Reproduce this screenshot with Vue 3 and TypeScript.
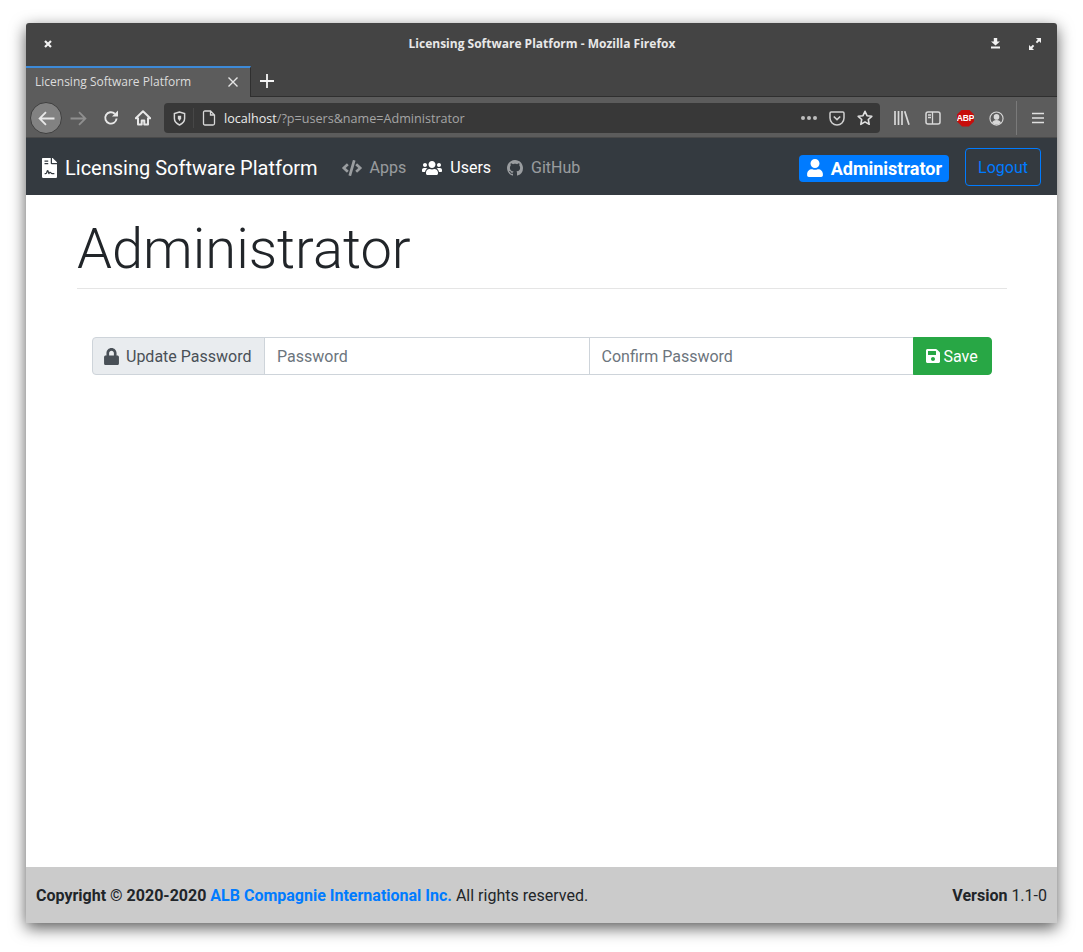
<script setup lang="ts">
interface NavLink {
  label: string
  viewBox: string
  width: number
  path: string
  active?: boolean
}

const navLinks: NavLink[] = [
  {
    label: 'Apps',
    viewBox: '0 0 640 512',
    width: 20,
    path: 'M278.9 511.5l-61-17.7c-6.4-1.8-10-8.5-8.2-14.9L346.2 8.7c1.8-6.4 8.5-10.1 14.9-8.2l61 17.7c6.4 1.8 10 8.5 8.2 14.9L293.8 503.3c-1.9 6.4-8.5 10.1-14.9 8.2zm-114-112.2l43.5-46.4c4.6-4.9 4.3-12.7-.8-17.2L117 256l90.6-79.7c5.1-4.5 5.5-12.3.8-17.2l-43.5-46.4c-4.5-4.8-12.1-5.1-17-.5L3.8 247.2c-5.1 4.7-5.1 12.8 0 17.5l144.1 135.1c4.9 4.6 12.5 4.4 17-.5zm327.2.6l144.1-135.1c5.1-4.7 5.1-12.8 0-17.5L492.1 112.1c-4.8-4.5-12.4-4.3-17 .5L431.6 159c-4.6 4.9-4.3 12.7.8 17.2L523 256l-90.6 79.7c-5.1 4.5-5.5 12.3-.8 17.2l43.5 46.4c4.5 4.9 12.1 5.1 17 .6z'
  },
  {
    label: 'Users',
    viewBox: '0 0 640 512',
    width: 20,
    active: true,
    path: 'M96 224c35.3 0 64-28.7 64-64s-28.7-64-64-64-64 28.7-64 64 28.7 64 64 64zm448 0c35.3 0 64-28.7 64-64s-28.7-64-64-64-64 28.7-64 64 28.7 64 64 64zm32 32h-64c-17.6 0-33.5 7.1-45.1 18.6 40.3 22.1 68.9 62 75.1 109.4h66c17.7 0 32-14.3 32-32v-32c0-35.3-28.7-64-64-64zm-256 0c61.9 0 112-50.1 112-112S381.9 32 320 32 208 82.1 208 144s50.1 112 112 112zm76.8 32h-8.3c-20.8 10-43.9 16-68.5 16s-47.6-6-68.5-16h-8.3C179.6 288 128 339.6 128 403.2V432c0 26.5 21.5 48 48 48h288c26.5 0 48-21.5 48-48v-28.8c0-63.6-51.6-115.2-115.2-115.2zm-223.7-13.4C161.5 263.1 145.6 256 128 256H64c-35.3 0-64 28.7-64 64v32c0 17.7 14.3 32 32 32h65.9c6.3-47.4 34.9-87.3 75.2-109.4z'
  },
  {
    label: 'GitHub',
    viewBox: '0 0 16 16',
    width: 16,
    path: 'M8 0C3.58 0 0 3.58 0 8c0 3.54 2.29 6.53 5.47 7.59.4.07.55-.17.55-.38 0-.19-.01-.82-.01-1.49-2.01.37-2.53-.49-2.69-.94-.09-.23-.48-.94-.82-1.13-.28-.15-.68-.52-.01-.53.63-.01 1.08.58 1.23.82.72 1.21 1.87.87 2.33.66.07-.52.28-.87.51-1.07-1.78-.2-3.64-.89-3.64-3.95 0-.87.31-1.59.82-2.15-.08-.2-.36-1.02.08-2.12 0 0 .67-.21 2.2.82.64-.18 1.32-.27 2-.27.68 0 1.36.09 2 .27 1.53-1.04 2.2-.82 2.2-.82.44 1.1.16 1.92.08 2.12.51.56.82 1.27.82 2.15 0 3.07-1.87 3.75-3.65 3.95.29.25.54.73.54 1.48 0 1.07-.01 1.93-.01 2.2 0 .21.15.46.55.38A8.013 8.013 0 0016 8c0-4.42-3.58-8-8-8z'
  }
]
</script>

<template>
  <div class="desktop">
    <div class="window">
      <header class="titlebar">
        <div class="wm-left">
          <svg viewBox="0 0 10 10" width="10" height="10"><path d="M2 2l6 6M8 2l-6 6" stroke="#f2f2f2" stroke-width="2.2" /></svg>
        </div>
        <span class="title">Licensing Software Platform - Mozilla Firefox</span>
        <div class="wm-right">
          <svg viewBox="0 0 9 11" width="9" height="11"><path d="M2.800 0h3.400v3.600H9L4.500 7.600 0 3.600h2.800zM0 8.600h9v2H0z" fill="#f2f2f2" /></svg>
          <svg viewBox="0 0 13 13" width="12" height="12"><path d="M7.500 0H13v5.500l-2-2L8.800 5.700 7.300 4.200 9.500 2zM5.500 13H0V7.500l2 2 2.200-2.200 1.500 1.500L3.500 11z" fill="#f2f2f2" /></svg>
        </div>
      </header>

      <div class="tabstrip">
        <div class="tab">
          <span class="tab-label">Licensing Software Platform</span>
          <svg viewBox="0 0 10 10" width="10" height="10"><path d="M.5.5l9 9M9.500.5l-9 9" stroke="#e6e6e6" stroke-width="1.400" /></svg>
        </div>
        <svg class="newtab" viewBox="0 0 14 14" width="14" height="14"><path d="M7 0v14M0 7h14" stroke="#f5f5f5" stroke-width="1.800" /></svg>
      </div>

      <div class="toolbar">
        <button class="back">
          <svg viewBox="0 0 16 14" width="17" height="15"><path d="M15.500 7H1.500M7.500 1l-6 6 6 6" fill="none" stroke="#e8e8e8" stroke-width="1.700" /></svg>
        </button>
        <svg class="tool forward" viewBox="0 0 16 14" width="17" height="15"><path d="M.5 7h14M8.500 1l6 6-6 6" fill="none" stroke="#8f8f8f" stroke-width="1.700" /></svg>
        <svg class="tool reload" viewBox="0 0 16 16" width="16" height="16"><path d="M13.600 8.500A5.700 5.700 0 1 1 11.800 3.700" fill="none" stroke="#e8e8e8" stroke-width="1.900" /><path d="M15 .6v6H9z" fill="#e8e8e8" /></svg>
        <svg class="tool home" viewBox="0 0 16 16" width="16" height="16"><path d="M8 1.200 .8 8.200h2.200v6.300h3.700V10.500h2.600v4H13V8.200h2.200z" fill="none" stroke="#e8e8e8" stroke-width="2" stroke-linejoin="round" /></svg>
        <div class="urlbar">
          <svg class="shield" viewBox="0 0 14 16" width="13" height="15"><path d="M7 1 1.500 2.600V8c0 3.200 2.500 5.500 5.500 7 3-1.500 5.500-3.800 5.500-7V2.600z" fill="none" stroke="#d8d8d8" stroke-width="1.600" /><path d="M5.200 5h3.600v3L7 11 5.200 8z" fill="#d8d8d8" /></svg>
          <span class="url-sep"></span>
          <svg class="page" viewBox="0 0 14 16" width="14" height="16"><path d="M1.500 2.500q0-1.500 1.500-1.500h5.500l4 4v8.500q0 1.500-1.500 1.500H3q-1.500 0-1.500-1.500zM8.500 1v4h4" fill="none" stroke="#d8d8d8" stroke-width="1.300" /></svg>
          <span class="url"><span class="host">localhost</span>/?p=users&amp;name=Administrator</span>
          <span class="dots"><i></i><i></i><i></i></span>
          <svg class="pocket" viewBox="0 0 16 15" width="16" height="15"><path d="M1 2.200q0-1.200 1.200-1.200h11.600Q15 1 15 2.200V7A7 7 0 0 1 1 7z" fill="none" stroke="#cfcfcf" stroke-width="1.500" /><path d="M4.800 5.500 8 8.500l3.200-3" fill="none" stroke="#cfcfcf" stroke-width="1.700" /></svg>
          <svg class="star" viewBox="0 0 16 16" width="16" height="16"><path d="M8 1.300l2 4.400 4.800.6-3.500 3.200.9 4.800L8 11.900l-4.200 2.400.9-4.800L1.200 6.300 6 5.700z" fill="none" stroke="#e0e0e0" stroke-width="1.600" stroke-linejoin="round" /></svg>
        </div>
        <div class="tools-right">
          <svg viewBox="0 0 16 14" width="16" height="14"><path d="M1 0v14M4.500 0v14M8 0v14M10.700.2l4.300 13.600" stroke="#d8d8d8" stroke-width="1.700" /></svg>
          <svg viewBox="0 0 16 14" width="16" height="14"><rect x="1" y="1" width="14" height="12" rx="2" fill="none" stroke="#d8d8d8" stroke-width="1.500" /><path d="M7.500 1v12M3 4h3M3 6.500h3" stroke="#d8d8d8" stroke-width="1.300" /></svg>
          <span class="abp">ABP</span>
          <svg viewBox="0 0 16 16" width="15" height="15"><circle cx="8" cy="8" r="7" fill="none" stroke="#d8d8d8" stroke-width="1.200" /><circle cx="8" cy="6.300" r="3" fill="#d8d8d8" /><path d="M3.300 12.500q1-3 4.700-3t4.700 3Q11 14.400 8 14.400t-4.700-1.900z" fill="#d8d8d8" /></svg>
          <span class="tool-sep"></span>
          <svg class="menu" viewBox="0 0 12 12" width="12" height="12"><path d="M0 1.500h12M0 6h12M0 10.500h12" stroke="#e0e0e0" stroke-width="1.600" /></svg>
        </div>
      </div>

      <nav class="navbar">
        <a class="brand">
          <svg viewBox="0 0 384 512" width="15" height="20"><path fill="currentColor" d="M224 136V0H24C10.700 0 0 10.700 0 24v464c0 13.300 10.700 24 24 24h336c13.300 0 24-10.700 24-24V160H248c-13.200 0-24-10.800-24-24zM64 72c0-4.420 3.580-8 8-8h80c4.420 0 8 3.580 8 8v16c0 4.420-3.580 8-8 8H72c-4.420 0-8-3.580-8-8V72zm0 64c0-4.420 3.580-8 8-8h80c4.420 0 8 3.580 8 8v16c0 4.420-3.580 8-8 8H72c-4.420 0-8-3.580-8-8v-16zm192.810 248H304c8.840 0 16 7.160 16 16s-7.160 16-16 16h-47.190c-16.450 0-31.270-9.140-38.640-23.860-2.950-5.920-8.090-6.520-10.170-6.520s-7.220.59-10.020 6.190l-7.670 15.340a15.986 15.986 0 0 1-14.310 8.840c-.38 0-.75-.02-1.140-.05-6.450-.45-12-4.750-14.030-10.890L144 354.590l-10.610 31.880c-5.890 17.660-22.380 29.530-41 29.530H80c-8.840 0-16-7.160-16-16s7.160-16 16-16h12.390c4.830 0 9.110-3.080 10.640-7.660l18.190-54.640c3.300-9.810 12.440-16.410 22.780-16.410s19.480 6.590 22.770 16.410l13.880 41.640c19.770-16.190 54.050-9.700 66 14.160 2.020 4.060 5.960 6.500 10.160 6.500zM377 105L279.100 7c-4.500-4.500-10.600-7-17-7H256v128h128v-6.100c0-6.300-2.500-12.400-7-16.900z" /></svg>
          Licensing Software Platform
        </a>
        <ul class="nav-links">
          <li v-for="link in navLinks" :key="link.label" :class="{ active: link.active }">
            <svg :viewBox="link.viewBox" :width="link.width" height="16"><path fill="currentColor" :d="link.path" /></svg>
            {{ link.label }}
          </li>
        </ul>
        <span class="badge">
          <svg viewBox="0 0 448 512" width="16" height="18"><path fill="currentColor" d="M224 256c70.700 0 128-57.300 128-128S294.700 0 224 0 96 57.300 96 128s57.300 128 128 128zm89.600 32h-16.700c-22.200 10.200-46.900 16-72.900 16s-50.600-5.800-72.900-16h-16.700C60.200 288 0 348.200 0 422.400V464c0 26.500 21.500 48 48 48h352c26.500 0 48-21.500 48-48v-41.600c0-74.200-60.200-134.400-134.400-134.400z" /></svg>
          Administrator
        </span>
        <a class="logout">Logout</a>
      </nav>

      <main class="content">
        <div class="container">
          <h1>Administrator</h1>
          <hr />
          <form class="input-group" @submit.prevent>
            <span class="addon">
              <svg viewBox="0 0 448 512" width="15" height="17"><path fill="currentColor" d="M400 224h-24v-72C376 68.200 307.800 0 224 0S72 68.200 72 152v72H48c-26.500 0-48 21.500-48 48v192c0 26.500 21.500 48 48 48h352c26.500 0 48-21.500 48-48V272c0-26.500-21.500-48-48-48zm-104 0H152v-72c0-39.700 32.300-72 72-72s72 32.300 72 72v72z" /></svg>
              Update Password
            </span>
            <input type="password" placeholder="Password" />
            <input class="confirm" type="password" placeholder="Confirm Password" />
            <button class="save" type="submit">
              <svg viewBox="0 0 448 512" width="14" height="16"><path fill="currentColor" d="M433.941 129.941l-83.882-83.882A48 48 0 0 0 316.118 32H48C21.490 32 0 53.490 0 80v352c0 26.510 21.490 48 48 48h352c26.510 0 48-21.490 48-48V163.882a48 48 0 0 0-14.059-33.941zM224 416c-35.346 0-64-28.654-64-64 0-35.346 28.654-64 64-64s64 28.654 64 64c0 35.346-28.654 64-64 64zm96-304.520V212c0 6.627-5.373 12-12 12H76c-6.627 0-12-5.373-12-12V108c0-6.627 5.373-12 12-12h228.520c3.183 0 6.235 1.264 8.485 3.515l3.480 3.480A11.996 11.996 0 0 1 320 111.480z" /></svg>
              Save
            </button>
          </form>
        </div>
      </main>

      <footer class="footer">
        <span><b>Copyright © 2020-2020 <a>ALB Compagnie International Inc.</a></b> All rights reserved.</span>
        <span><b>Version</b> 1.1-0</span>
      </footer>
    </div>
  </div>
</template>

<style>
html, body { margin: 0; background: #fff; }
</style>

<style scoped>
.desktop {
  width: 1083px;
  height: 952px;
  box-sizing: border-box;
  padding: 23px 26px 29px;
  overflow: hidden;
  background: #fff;
  font-family: Roboto, sans-serif;
  font-size: 16px;
  color: #212529;
}
.window {
  width: 1031px;
  height: 900px;
  display: flex;
  flex-direction: column;
  background: #fff;
  border-radius: 3px 3px 0 0;
  box-shadow: 0 5px 16px rgba(0, 0, 0, .65);
}
.titlebar {
  height: 43px;
  flex: none;
  box-sizing: border-box;
  display: grid;
  grid-template-columns: 1fr auto 1fr;
  align-items: center;
  background: #444;
  border-radius: 3px 3px 0 0;
  padding: 0 16px 2px 17px;
}
.wm-left { display: flex; }
.title {
  font: 700 12px "Open Sans", sans-serif;
  color: #e8e8e8;
}
.wm-right { display: flex; align-items: center; justify-content: flex-end; gap: 29px; }
.tabstrip {
  height: 31px;
  flex: none;
  display: flex;
  align-items: center;
  background: #444;
  border-bottom: 1px solid #2f2f2f;
  box-sizing: border-box;
}
.tab {
  width: 225px;
  height: 31px;
  box-sizing: border-box;
  flex: none;
  display: flex;
  align-items: center;
  justify-content: space-between;
  padding: 0 12px 0 9px;
  background: #5c5c5c;
  border-top: 2px solid #3d8ad8;
  border-right: 1px solid #2f2f2f;
  font: 400 12px "Open Sans", sans-serif;
  color: #dcdcdc;
}
.tab-label { margin-top: -2px; }
.newtab { margin-left: 9px; }
.toolbar {
  height: 41px;
  flex: none;
  box-sizing: border-box;
  display: flex;
  align-items: center;
  background: #5c5c5c;
  border-bottom: 1px solid #4a4a4a;
  padding: 2px 11px 0 4px;
}
.back {
  width: 32px;
  height: 32px;
  padding: 0;
  flex: none;
  display: flex;
  align-items: center;
  justify-content: center;
  background: #828282;
  border: 1px solid #3f3f3f;
  border-radius: 50%;
}
.tool { flex: none; }
.forward { margin-left: 8px; }
.reload { margin-left: 16px; }
.home { margin-left: 16px; }
.urlbar {
  width: 716px;
  height: 30px;
  flex: none;
  box-sizing: border-box;
  margin-left: 13px;
  display: flex;
  align-items: center;
  background: #383838;
  border-radius: 4px;
  padding: 0 7px 0 9px;
  font: 400 12.6px "Open Sans", sans-serif;
  color: #a5a5a5;
}
.url-sep { width: 1px; height: 20px; background: #474747; margin: 0 8px 0 7px; }
.page { margin-right: 8px; }
.url { flex: 1; white-space: nowrap; }
.host { color: #ececec; }
.dots { display: flex; gap: 2px; margin-right: 12px; }
.dots i { width: 4px; height: 4px; border-radius: 50%; background: #bdbdbd; }
.pocket { margin-right: 12px; }
.tools-right { display: flex; align-items: center; margin-left: 14px; flex: 1; }
.tools-right > svg:nth-child(1) { margin-right: 15px; }
.tools-right > svg:nth-child(2) { margin-right: 16px; }
.abp {
  width: 17px;
  height: 17px;
  flex: none;
  display: flex;
  align-items: center;
  justify-content: center;
  background: #c70d0c;
  clip-path: polygon(30% 0, 70% 0, 100% 30%, 100% 70%, 70% 100%, 30% 100%, 0 70%, 0 30%);
  font: 700 8.5px "Liberation Sans", sans-serif;
  color: #fff;
  letter-spacing: -.2px;
  margin-right: 15px;
}
.tool-sep { width: 1px; height: 34px; background: #7a7a7a; margin: 0 15px 0 12px; }
.navbar {
  height: 57px;
  flex: none;
  display: flex;
  align-items: center;
  box-sizing: border-box;
  background: #343a40;
  padding: 0 16px;
}
.brand {
  display: flex;
  align-items: center;
  gap: 8px;
  font-size: 20px;
  color: #fff;
  white-space: nowrap;
  margin-top: 2px;
}
.nav-links {
  list-style: none;
  display: flex;
  gap: 16px;
  margin: 2px 0 0 24px;
  padding: 0;
  flex: 1;
  color: rgba(255, 255, 255, .5);
}
.nav-links li { display: flex; align-items: center; gap: 8px; }
.nav-links .active { color: #fff; }
.badge {
  height: 27px;
  box-sizing: border-box;
  display: flex;
  align-items: center;
  gap: 8px;
  padding: 0 7px 0 8px;
  background: #007bff;
  border-radius: 4px;
  font-size: 18px;
  font-weight: 700;
  color: #fff;
  margin-top: 3px;
}
.logout {
  width: 76px;
  height: 38px;
  box-sizing: border-box;
  margin-left: 16px;
  padding-top: 2px;
  display: flex;
  align-items: center;
  justify-content: center;
  border: 1px solid #007bff;
  border-radius: 4px;
  color: #007bff;
}
.content { flex: 1; min-height: 0; }
.container { width: 930px; margin-left: 51px; box-sizing: border-box; }
h1 {
  margin: 21px 0 0;
  font-size: 56px;
  font-weight: 300;
  line-height: 67px;
  color: #212529;
}
hr {
  border: 0;
  border-top: 1px solid rgba(0, 0, 0, .1);
  margin: 5px 0 48px;
}
.input-group {
  display: flex;
  width: 900px;
  height: 38px;
  margin-left: 15px;
}
.addon {
  width: 173px;
  box-sizing: border-box;
  flex: none;
  display: flex;
  align-items: center;
  gap: 7px;
  padding-left: 11px;
  background: #e9ecef;
  border: 1px solid #ced4da;
  border-radius: 4px 0 0 4px;
  color: #495057;
  white-space: nowrap;
}
input {
  flex: 1;
  min-width: 0;
  box-sizing: border-box;
  margin-left: -1px;
  padding: 0 12px;
  border: 1px solid #ced4da;
  outline: 0;
  background: #fff;
  font: 400 16px Roboto, sans-serif;
  color: #495057;
}
input::placeholder { color: #6c757d; opacity: 1; }
.save {
  width: 79px;
  flex: none;
  margin-left: -1px;
  display: flex;
  align-items: center;
  justify-content: center;
  gap: 3px;
  padding: 0 1px 0 0;
  border: 1px solid #28a745;
  border-radius: 0 4px 4px 0;
  background: #28a745;
  color: #fff;
  font: 400 16px Roboto, sans-serif;
}
.footer {
  height: 56px;
  flex: none;
  box-sizing: border-box;
  display: flex;
  align-items: center;
  justify-content: space-between;
  padding: 0 10px;
  background: #cbcbcb;
  color: #212529;
}
.footer a { color: #007bff; }
</style>
